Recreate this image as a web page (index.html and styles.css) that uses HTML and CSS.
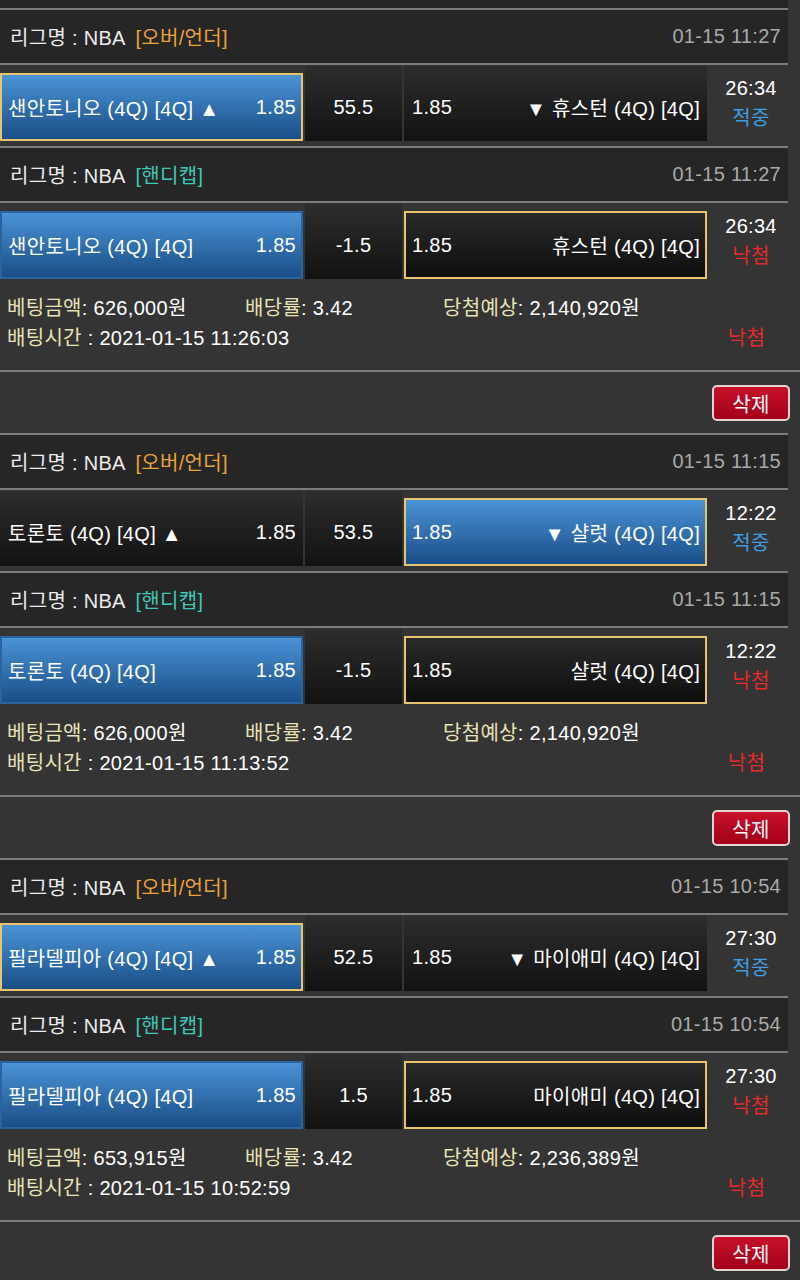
FILE: index.html
```html
<!DOCTYPE html>
<html lang="ko">
<head>
    <meta charset="UTF-8">
    <meta name="viewport" content="width=device-width, initial-scale=1.0">
    <title>배팅내역</title>
    <link rel="stylesheet" href="styles.css">
</head>
<body>
    <div class="top-strip"></div>

    <section class="slip">
        <div class="league">
            <span>리그명 : NBA <em class="type ou">[오버/언더]</em></span>
            <span class="date">01-15 11:27</span>
        </div>
        <div class="game">
            <div class="pick home sel hit"><span>샌안토니오 (4Q) [4Q] ▲</span><span>1.85</span></div>
            <div class="line">55.5</div>
            <div class="pick away"><span>1.85</span><span>▼ 휴스턴 (4Q) [4Q]</span></div>
            <div class="clock"><span>26:34</span><span class="win">적중</span></div>
        </div>
        <div class="league">
            <span>리그명 : NBA <em class="type hc">[핸디캡]</em></span>
            <span class="date">01-15 11:27</span>
        </div>
        <div class="game">
            <div class="pick home sel"><span>샌안토니오 (4Q) [4Q]</span><span>1.85</span></div>
            <div class="line">-1.5</div>
            <div class="pick away hit"><span>1.85</span><span>휴스턴 (4Q) [4Q]</span></div>
            <div class="clock"><span>26:34</span><span class="lose">낙첨</span></div>
        </div>
        <div class="summary">
            <div class="sum-row">
                <span><b>베팅금액</b>: 626,000원</span>
                <span><b>배당률</b>: 3.42</span>
                <span><b>당첨예상</b>: 2,140,920원</span>
            </div>
            <div class="sum-row2">
                <span><b>배팅시간</b> : 2021-01-15 11:26:03</span>
                <span class="lose result">낙첨</span>
            </div>
        </div>
        <div class="actions"><button class="del">삭제</button></div>
    </section>

    <section class="slip">
        <div class="league">
            <span>리그명 : NBA <em class="type ou">[오버/언더]</em></span>
            <span class="date">01-15 11:15</span>
        </div>
        <div class="game">
            <div class="pick home"><span>토론토 (4Q) [4Q] ▲</span><span>1.85</span></div>
            <div class="line">53.5</div>
            <div class="pick away sel hit"><span>1.85</span><span>▼ 샬럿 (4Q) [4Q]</span></div>
            <div class="clock"><span>12:22</span><span class="win">적중</span></div>
        </div>
        <div class="league">
            <span>리그명 : NBA <em class="type hc">[핸디캡]</em></span>
            <span class="date">01-15 11:15</span>
        </div>
        <div class="game">
            <div class="pick home sel"><span>토론토 (4Q) [4Q]</span><span>1.85</span></div>
            <div class="line">-1.5</div>
            <div class="pick away hit"><span>1.85</span><span>샬럿 (4Q) [4Q]</span></div>
            <div class="clock"><span>12:22</span><span class="lose">낙첨</span></div>
        </div>
        <div class="summary">
            <div class="sum-row">
                <span><b>베팅금액</b>: 626,000원</span>
                <span><b>배당률</b>: 3.42</span>
                <span><b>당첨예상</b>: 2,140,920원</span>
            </div>
            <div class="sum-row2">
                <span><b>배팅시간</b> : 2021-01-15 11:13:52</span>
                <span class="lose result">낙첨</span>
            </div>
        </div>
        <div class="actions"><button class="del">삭제</button></div>
    </section>

    <section class="slip">
        <div class="league">
            <span>리그명 : NBA <em class="type ou">[오버/언더]</em></span>
            <span class="date">01-15 10:54</span>
        </div>
        <div class="game">
            <div class="pick home sel hit"><span>필라델피아 (4Q) [4Q] ▲</span><span>1.85</span></div>
            <div class="line">52.5</div>
            <div class="pick away"><span>1.85</span><span>▼ 마이애미 (4Q) [4Q]</span></div>
            <div class="clock"><span>27:30</span><span class="win">적중</span></div>
        </div>
        <div class="league">
            <span>리그명 : NBA <em class="type hc">[핸디캡]</em></span>
            <span class="date">01-15 10:54</span>
        </div>
        <div class="game">
            <div class="pick home sel"><span>필라델피아 (4Q) [4Q]</span><span>1.85</span></div>
            <div class="line">1.5</div>
            <div class="pick away hit"><span>1.85</span><span>마이애미 (4Q) [4Q]</span></div>
            <div class="clock"><span>27:30</span><span class="lose">낙첨</span></div>
        </div>
        <div class="summary">
            <div class="sum-row">
                <span><b>베팅금액</b>: 653,915원</span>
                <span><b>배당률</b>: 3.42</span>
                <span><b>당첨예상</b>: 2,236,389원</span>
            </div>
            <div class="sum-row2">
                <span><b>배팅시간</b> : 2021-01-15 10:52:59</span>
                <span class="lose result">낙첨</span>
            </div>
        </div>
        <div class="actions"><button class="del">삭제</button></div>
    </section>
</body>
</html>
```

FILE: styles.css
```css
body {
    margin: 0;
    padding: 0;
    background-color: #343434;
    color: #fff;
    font-family: 'Liberation Sans', 'Noto Sans CJK KR', sans-serif;
    font-size: 20px;
    letter-spacing: 0.3px;
}
.top-strip {
    width: 788px;
    height: 8px;
    background-color: #262626;
}
.league {
    width: 788px;
    height: 57px;
    box-sizing: border-box;
    border-top: 2px solid #7c7c7c;
    border-bottom: 2px solid #7c7c7c;
    background-color: #262626;
    display: flex;
    justify-content: space-between;
    align-items: center;
    padding: 0 7px 0 10px;
    color: #ececec;
}
.type {
    font-style: normal;
    margin-left: 5px;
}
.ou {
    color: #e9a23b;
}
.hc {
    color: #3cc9b8;
}
.date {
    color: #a9a9a9;
}
.game {
    display: flex;
    height: 81px;
    box-sizing: border-box;
    padding: 1px 0 5px;
}
.pick {
    width: 303px;
    box-sizing: border-box;
    display: flex;
    justify-content: space-between;
    align-items: center;
    padding: 7px 7px 0 8px;
    background: linear-gradient(#2d2d2d, #121212);
    white-space: nowrap;
}
.pick.home {
    margin-right: 2px;
}
.pick.sel {
    background: linear-gradient(#4a93d6, #1a4e87);
}
.pick.sel,
.pick.hit {
    margin-top: 7px;
    border: 2px solid #2a64a0;
    padding: 0 5px 0 6px;
}
.pick.hit {
    border-color: #e8c46c;
}
.pick.hit:not(.sel) {
    background: linear-gradient(#2a2a2a, #0e0e0e);
}
.line {
    width: 97px;
    margin-right: 2px;
    padding-top: 7px;
    box-sizing: border-box;
    display: flex;
    justify-content: center;
    align-items: center;
    background: linear-gradient(#2d2d2d, #121212);
}
.clock {
    flex: 1;
    display: flex;
    flex-direction: column;
    justify-content: center;
    align-items: center;
    line-height: 30px;
    padding: 0 5px 2px 0;
}
.win {
    color: #3e9ee0;
}
.lose {
    color: #e8282c;
}
.summary {
    height: 86px;
    box-sizing: border-box;
    padding: 9px 0 0 7px;
    line-height: 30px;
}
.sum-row {
    display: grid;
    grid-template-columns: 238px 198px auto;
}
.sum-row2 {
    display: flex;
    justify-content: space-between;
}
.result {
    width: 93px;
    box-sizing: border-box;
    text-align: center;
    padding-right: 14px;
}
b {
    font-weight: normal;
    color: #e8e3b5;
}
.actions {
    height: 63px;
    box-sizing: border-box;
    border-top: 2px solid #7c7c7c;
    display: flex;
    justify-content: flex-end;
    padding: 13px 10px 0 0;
}
.del {
    width: 78px;
    height: 36px;
    padding: 0;
    border: 2px solid #e5d3d3;
    border-radius: 5px;
    background: linear-gradient(#c8102a, #a3001a);
    color: #fff;
    font-family: inherit;
    font-size: 20px;
    letter-spacing: 0.3px;
}
```
